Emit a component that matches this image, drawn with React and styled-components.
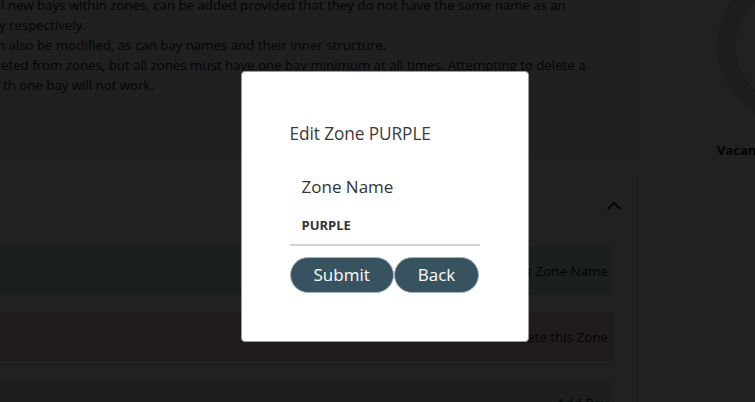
import React from "react";
import styled, { createGlobalStyle } from "styled-components";

const GlobalStyle = createGlobalStyle`
  html, body { margin: 0; padding: 0; background: #ffffff; }
  body {
    font-family: "Open Sans", "Noto Sans", sans-serif;
    color: #212529;
    overflow: hidden;
  }
`;

const Viewport = styled.div`
  width: 755px;
  height: 402px;
  overflow: hidden;
  position: relative;
`;

const Page = styled.div`
  display: grid;
  grid-template-columns: 648px 320px;
  margin-top: -40px;
  margin-left: -10px;
`;

const Main = styled.main`
  display: flex;
  flex-direction: column;
`;

const InfoCard = styled.section`
  background: #f2f2f2;
  padding: 35px 0 62px 10px;
  font-size: 13.25px;
  line-height: 20px;
  color: #212529;
`;

const Line = styled.div`
  white-space: nowrap;
  margin-left: ${(p) => p.$indent || 0}px;
`;

const Accordion = styled.section`
  margin-top: 14px;
  padding-right: 23px;
  border-right: 1px solid #e6e6e6;
`;

const AccordionHeader = styled.div`
  height: 70px;
  display: flex;
  align-items: center;
  justify-content: flex-end;
`;

const Chevron = styled.svg`
  width: 16px;
  height: 10px;
  margin-right: -8px;
`;

const Rows = styled.div`
  display: flex;
  flex-direction: column;
  gap: 17px;
  padding-top: 5px;
`;

const ActionRow = styled.div`
  height: 49px;
  border-radius: 4px;
  background: ${(p) => p.$bg};
  display: flex;
  align-items: center;
  justify-content: flex-end;
  padding-right: 6px;
  font-size: 13.4px;
  color: #222;
`;

const Side = styled.aside`
  padding: 6px 0 0 77px;
  display: flex;
  flex-direction: column;
  align-items: flex-start;
`;

const Donut = styled.svg`
  width: 160px;
  height: 160px;
`;

const LegendLabel = styled.div`
  margin-top: 15px;
  margin-left: 2px;
  font-size: 13px;
  font-weight: 700;
  line-height: 18px;
  color: #222;
`;

const Backdrop = styled.div`
  position: fixed;
  inset: 0;
  background: rgba(0, 0, 0, 0.87);
  display: flex;
  align-items: center;
  justify-content: center;
  padding: 10px 0 0 14px;
  box-sizing: border-box;
`;

const Modal = styled.div`
  width: 288px;
  box-sizing: border-box;
  padding: 50px 48px 48px 48px;
  background: #ffffff;
  border-radius: 4px;
  border: 1px solid #9a9a9a;
  display: flex;
  flex-direction: column;
`;

const Title = styled.h2`
  margin: 0;
  font-size: 17.3px;
  font-weight: 400;
  line-height: 24px;
  color: #3a3a3a;
  letter-spacing: -0.1px;
`;

const Field = styled.div`
  margin-top: 28px;
  display: flex;
  flex-direction: column;
  padding: 0 12px;
  border-bottom: 2px solid #d3d3d3;
`;

const Label = styled.label`
  font-size: 17px;
  line-height: 26px;
  color: #333;
`;

const Value = styled.div`
  margin-top: 16px;
  padding-bottom: 10px;
  font-size: 13px;
  font-weight: 700;
  line-height: 18px;
  color: #333;
`;

const Buttons = styled.div`
  margin-top: 11px;
  display: flex;
`;

const PillButton = styled.button`
  height: 36px;
  padding: 0 ${(p) => p.$pad}px;
  border-radius: 18px;
  border: 1px solid #a7b4ba;
  background: #37535f;
  color: #ffffff;
  font-family: "Open Sans", "Noto Sans", sans-serif;
  font-size: 17px;
  line-height: 34px;
  cursor: pointer;
`;

export default function App() {
  return (
    <>
      <GlobalStyle />
      <Viewport>
        <Page>
          <Main>
            <InfoCard>
              <Line $indent={1}>l new bays within zones, can be added provided that they do not have the same name as an</Line>
              <Line $indent={-1}>y respectively.</Line>
              <Line $indent={-3}>n also be modified, as can bay names and their inner structure.</Line>
              <Line $indent={1}>eted from zones, but all zones must have one bay minimum at all times. Attempting to delete a</Line>
              <Line $indent={3}>th one bay will not work.</Line>
            </InfoCard>
            <Accordion>
              <AccordionHeader>
                <Chevron viewBox="0 0 16 10">
                  <polyline points="2,8 8,2 14,8" fill="none" stroke="#222" strokeWidth="2" />
                </Chevron>
              </AccordionHeader>
              <Rows>
                <ActionRow $bg="#d1ecf1">Edit Zone Name</ActionRow>
                <ActionRow $bg="#f8d7da">Delete this Zone</ActionRow>
                <ActionRow $bg="#d4edda">Add Bay</ActionRow>
              </Rows>
            </Accordion>
          </Main>
          <Side>
            <Donut viewBox="0 0 160 160">
              <circle cx="80" cy="80" r="68.5" fill="none" stroke="#dedede" strokeWidth="19" />
            </Donut>
            <LegendLabel>Vacant</LegendLabel>
          </Side>
        </Page>
        <Backdrop>
          <Modal>
            <Title>Edit Zone PURPLE</Title>
            <Field>
              <Label>Zone Name</Label>
              <Value>PURPLE</Value>
            </Field>
            <Buttons>
              <PillButton $pad={23}>Submit</PillButton>
              <PillButton $pad={23}>Back</PillButton>
            </Buttons>
          </Modal>
        </Backdrop>
      </Viewport>
    </>
  );
}
